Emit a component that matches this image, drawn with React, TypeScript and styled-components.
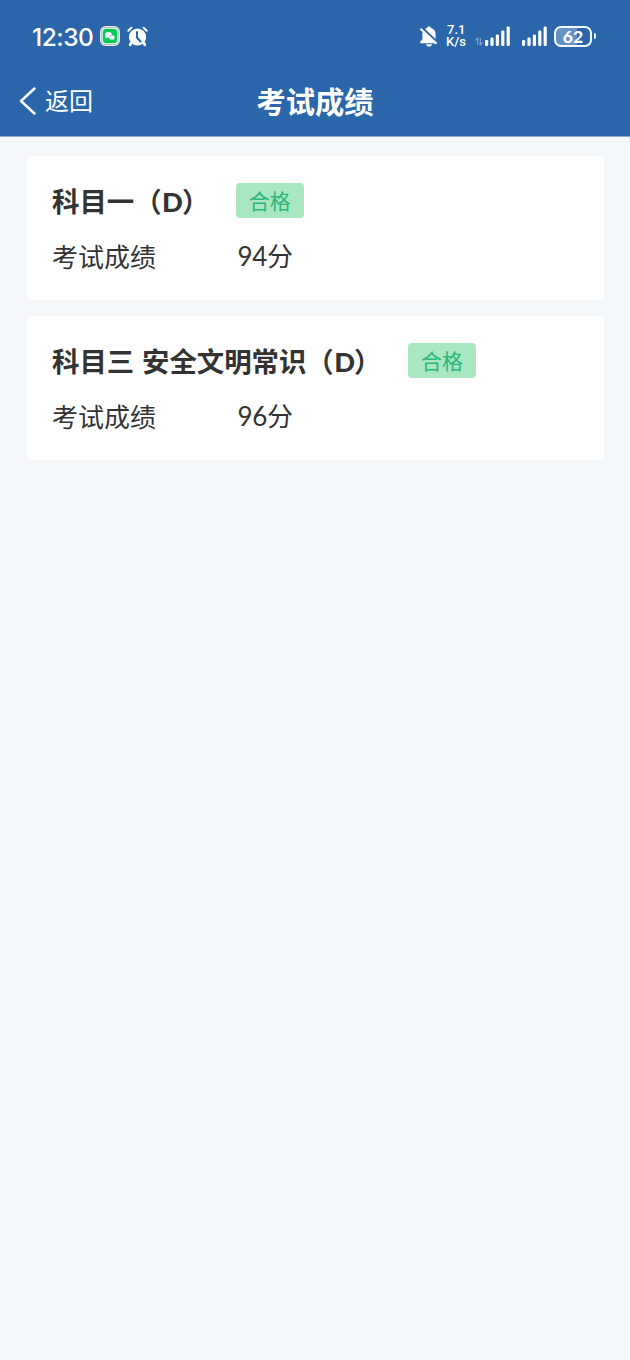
import React from "react";
import styled, { createGlobalStyle } from "styled-components";

const GlobalStyle = createGlobalStyle`
  * { box-sizing: border-box; }
  body {
    margin: 0;
    background: #f4f8fa;
    font-family: "Noto Sans CJK SC", sans-serif;
    color: #333;
  }
`;

const Page = styled.div`
  min-height: 1360px;
  background: #f4f8fa;
`;

const Header = styled.header`
  height: 137px;
  background: #2b65aa;
  border-bottom: 1px solid #8facd0;
  color: #fff;
`;

const StatusBar = styled.div`
  height: 72px;
  padding: 0 34px 0 32px;
  display: flex;
  align-items: center;
  justify-content: space-between;
`;

const StatusGroup = styled.div`
  display: flex;
  align-items: center;
`;

const Clock = styled.span`
  width: 68px;
  padding-top: 1px;
  font: 500 24.5px/30px Inter, sans-serif;
  letter-spacing: -0.5px;
  white-space: nowrap;
`;

const Speed = styled.div`
  width: 29px;
  margin-left: 7px;
  display: flex;
  flex-direction: column;
  font: 500 13px/12px Roboto, sans-serif;
`;

const SpeedLine = styled.span<{ $indent?: number }>`
  padding-left: ${(p) => p.$indent ?? 0}px;
`;

const Glyph = styled.svg<{ $gap?: number }>`
  display: block;
  flex: none;
  margin-left: ${(p) => p.$gap ?? 0}px;
`;

const Battery = styled.div`
  width: 38px;
  height: 21px;
  margin-left: 7px;
  border: 2px solid #f4f8fc;
  border-radius: 7px;
  background: linear-gradient(90deg, #6591c5 62%, #2b65aa 62%);
  font: 900 17.5px/17px Lato, sans-serif;
  text-align: center;
`;

const BatteryTip = styled.div`
  width: 2px;
  height: 6px;
  margin-left: 2px;
  border-radius: 0 2px 2px 0;
  background: #fff;
`;

const NavBar = styled.nav`
  height: 56px;
  padding: 0 19px;
  display: grid;
  grid-template-columns: 1fr auto 1fr;
  align-items: center;
`;

const Back = styled.div`
  display: flex;
  align-items: center;
  gap: 9px;
  font-size: 24px;
  line-height: 32px;
`;

const BackArrow = styled.svg`
  display: block;
  margin-top: 2px;
`;

const Title = styled.h1`
  margin: 0;
  font-size: 29.3px;
  line-height: 40px;
  font-weight: 700;
`;

const Results = styled.main`
  padding: 19px 26px;
  display: flex;
  flex-direction: column;
  gap: 16.5px;
`;

const Card = styled.section`
  height: 143.5px;
  padding: 26px;
  border-radius: 6px;
  background: #fff;
`;

const Subject = styled.div`
  height: 37px;
  display: flex;
  align-items: center;
  gap: 26.5px;
`;

const SubjectName = styled.h2`
  margin: 0;
  font-size: 27.4px;
  line-height: 37px;
  font-weight: 700;
  word-spacing: 1.6px;
  white-space: nowrap;
`;

const LicenseClass = styled.span`
  margin: 0 -1px 0 0.5px;
  font-family: Lato, sans-serif;
  font-weight: 900;
`;

const Badge = styled.span`
  width: 68px;
  height: 35.5px;
  border-radius: 4px;
  background: #a8e7c0;
  color: #2db67a;
  font-size: 21px;
  line-height: 35px;
  text-align: center;
`;

const Score = styled.div`
  margin-top: 18px;
  display: grid;
  grid-template-columns: 185.5px auto;
  font-size: 26px;
  line-height: 38px;
`;

const Points = styled.span`
  font-family: Lato, "Noto Sans CJK SC", sans-serif;
  letter-spacing: -0.3px;
`;

const Signal = ({ gap }: { gap: number }) => (
  <Glyph $gap={gap} width="25" height="20" viewBox="0 0 25 20" fill="#fff">
    <rect x="0" y="14" width="3.2" height="6" rx="1.2" />
    <rect x="5.4" y="11.5" width="3.2" height="8.5" rx="1.2" />
    <rect x="10.8" y="8.5" width="3.2" height="11.5" rx="1.2" />
    <rect x="16.2" y="4.5" width="3.2" height="15.5" rx="1.2" />
    <rect x="21.6" y="0.5" width="3.2" height="19.5" rx="1.2" />
  </Glyph>
);

const ChatIcon = () => (
  <Glyph width="20" height="20" viewBox="0 0 20 20">
    <rect width="20" height="20" rx="6" fill="#fff" />
    <rect x="1.2" y="1.2" width="17.6" height="17.6" rx="5" fill="none" stroke="#80908a" strokeWidth="0.7" />
    <rect x="2.7" y="2.7" width="14.6" height="14.6" rx="3.8" fill="#08c95b" />
    <ellipse cx="8.4" cy="8.8" rx="3.5" ry="2.9" fill="#fff" />
    <path d="M5.8 10.5 5.6 12.6l2.2-1.2z" fill="#fff" />
    <ellipse cx="12" cy="11.4" rx="3" ry="2.5" fill="#fff" stroke="#08c95b" strokeWidth="0.5" />
  </Glyph>
);

const AlarmIcon = () => (
  <Glyph $gap={7} width="21" height="21" viewBox="0 0 21 21">
    <circle cx="10.5" cy="11" r="8.6" fill="#fff" />
    <path d="m4.5 16.5-1.3 2.3M16.5 16.5l1.3 2.3" stroke="#fff" strokeWidth="2.8" strokeLinecap="round" />
    <path d="M1.3 4.7 4.3 1.8M19.7 4.7 16.7 1.8" stroke="#fff" strokeWidth="2" strokeLinecap="round" />
    <path d="M10 6v5.5l3.5 4" fill="none" stroke="#2b65aa" strokeWidth="2" strokeLinecap="round" strokeLinejoin="round" />
  </Glyph>
);

const MutedBellIcon = () => (
  <Glyph width="20" height="21" viewBox="0 0 20 21">
    <path
      d="M10 .5c1.2 0 1.9.7 2 1.5 3 .9 4.6 3.2 4.6 6.2v5l1.7 2.5v1.6H1.2v-1.6l2.2-2.5v-5c0-3 1.6-5.3 4.6-6.2C8.1 1.2 8.8.5 10 .5z"
      fill="#fff"
    />
    <path d="M7 18.2h6c-.3 1.5-1.5 2.3-3 2.3s-2.7-.8-3-2.3z" fill="#fff" />
    <path d="M2.7 1.3 20 17.5" stroke="#2b65aa" strokeWidth="2" />
    <path d="M1.5 2.8 17.3 17.8" stroke="#fff" strokeWidth="2" />
  </Glyph>
);

const DataArrows = () => (
  <Glyph width="8" height="20" viewBox="0 0 8 20" fill="none" stroke="#80a3cc" strokeWidth="1.2">
    <path d="M.5 14.5 2.7 12v7M7.5 16.5 5.3 19v-7" />
  </Glyph>
);

const results = [
  { subject: "科目一", score: "94分" },
  { subject: "科目三 安全文明常识", score: "96分" },
];

export default function App() {
  return (
    <Page>
      <GlobalStyle />
      <Header>
        <StatusBar>
          <StatusGroup>
            <Clock>12:30</Clock>
            <ChatIcon />
            <AlarmIcon />
          </StatusGroup>
          <StatusGroup>
            <MutedBellIcon />
            <Speed>
              <SpeedLine $indent={1}>7.1</SpeedLine>
              <SpeedLine>K/s</SpeedLine>
            </Speed>
            <DataArrows />
            <Signal gap={2} />
            <Signal gap={12} />
            <Battery>62</Battery>
            <BatteryTip />
          </StatusGroup>
        </StatusBar>
        <NavBar>
          <Back>
            <BackArrow width="17" height="28" viewBox="0 0 17 28" fill="none" stroke="#fff" strokeWidth="2.4">
              <path d="M15.5 1.5 2 14l13.5 12.5" strokeLinecap="round" strokeLinejoin="round" />
            </BackArrow>
            返回
          </Back>
          <Title>考试成绩</Title>
        </NavBar>
      </Header>
      <Results>
        {results.map((r) => (
          <Card key={r.subject}>
            <Subject>
              <SubjectName>
                {r.subject}（<LicenseClass>D</LicenseClass>）
              </SubjectName>
              <Badge>合格</Badge>
            </Subject>
            <Score>
              <span>考试成绩</span>
              <Points>{r.score}</Points>
            </Score>
          </Card>
        ))}
      </Results>
    </Page>
  );
}
